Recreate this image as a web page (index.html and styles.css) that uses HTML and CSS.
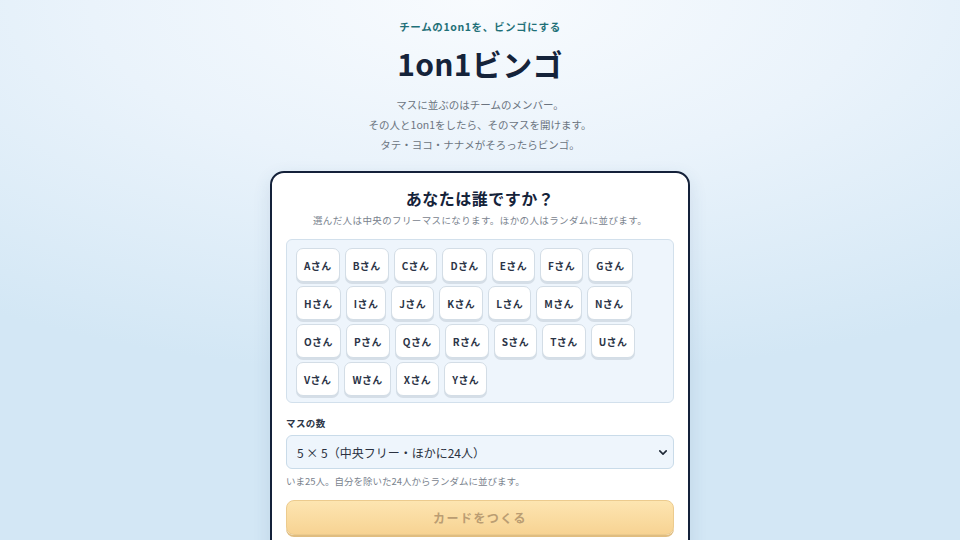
FILE: index.html
```html
<!DOCTYPE html>
<html lang="ja">
<head>
<meta charset="utf-8">
<title>1on1ビンゴ</title>
<link rel="stylesheet" href="styles.css">
</head>
<body>
<main class="page">
  <header class="hero">
    <p class="eyebrow">チームの1on1を、ビンゴにする</p>
    <h1 class="title">1on1ビンゴ</h1>
    <p class="lead">マスに並ぶのはチームのメンバー。<br>その人と1on1をしたら、そのマスを開けます。<br>タテ・ヨコ・ナナメがそろったらビンゴ。</p>
  </header>
  <section class="card">
    <h2 class="card-title">あなたは誰ですか？</h2>
    <p class="card-sub">選んだ人は中央のフリーマスになります。ほかの人はランダムに並びます。</p>
    <div class="members">
      <button class="chip">Aさん</button><button class="chip">Bさん</button><button class="chip">Cさん</button><button class="chip">Dさん</button><button class="chip">Eさん</button><button class="chip">Fさん</button><button class="chip">Gさん</button>
      <button class="chip">Hさん</button><button class="chip">Iさん</button><button class="chip">Jさん</button><button class="chip">Kさん</button><button class="chip">Lさん</button><button class="chip">Mさん</button><button class="chip">Nさん</button>
      <button class="chip">Oさん</button><button class="chip">Pさん</button><button class="chip">Qさん</button><button class="chip">Rさん</button><button class="chip">Sさん</button><button class="chip">Tさん</button><button class="chip">Uさん</button>
      <button class="chip">Vさん</button><button class="chip">Wさん</button><button class="chip">Xさん</button><button class="chip">Yさん</button>
    </div>
    <label class="field-label" for="size">マスの数</label>
    <div class="select-wrap">
      <select id="size" class="select">
        <option>5 × 5（中央フリー・ほかに24人）</option>
      </select>
      <svg class="chev" viewBox="0 0 10 6" width="8" height="5"><path d="M1 1l4 4 4-4" fill="none" stroke="#1f2937" stroke-width="2" stroke-linecap="round" stroke-linejoin="round"/></svg>
    </div>
    <p class="hint">いま25人。自分を除いた24人からランダムに並びます。</p>
    <button class="make" disabled>カードをつくる</button>
    <div class="next"></div>
  </section>
</main>
</body>
</html>
```
FILE: styles.css
```css
* { box-sizing: border-box; }
html, body { height: 100%; }
body {
  margin: 0;
  font-family: "Noto Sans CJK JP", "Noto Sans", sans-serif;
  color: #15233a;
  background: radial-gradient(ellipse 90% 70% at 50% 0%, #f8fbfe 0%, #eaf3fb 45%, #d3e7f5 100%);
  background-color: #d3e7f5;
  overflow: hidden;
}
.page {
  display: flex;
  flex-direction: column;
  align-items: center;
  padding-top: 18px;
}
.hero { text-align: center; }
.eyebrow {
  margin: 0;
  font-size: 10.5px;
  line-height: 18px;
  font-weight: 700;
  color: #1f7078;
  letter-spacing: 0.06em;
}
.title {
  margin: 8px 0 0;
  font-size: 30px;
  line-height: 38px;
  font-weight: 700;
  color: #15233a;
  letter-spacing: 0.01em;
}
.lead {
  margin: 13px 0 0;
  font-size: 10.5px;
  line-height: 20px;
  color: #6b7480;
  letter-spacing: 0;
}
.card {
  margin-top: 16px;
  width: 420px;
  background: #ffffff;
  border: 2px solid #14213a;
  border-radius: 14px;
  padding: 13px 14px 0;
  display: flex;
  flex-direction: column;
  box-shadow: 0 6px 18px rgba(40, 80, 120, 0.12);
}
.card-title {
  margin: 0;
  text-align: center;
  font-size: 16px;
  line-height: 24px;
  font-weight: 700;
  color: #15233a;
  letter-spacing: 0.03em;
}
.card-sub {
  margin: 2px 0 0;
  text-align: center;
  font-size: 9.5px;
  line-height: 16px;
  color: #7a838e;
  letter-spacing: 0.04em;
}
.members {
  margin-top: 11px;
  background: #eef5fc;
  border: 1px solid #d2e0ec;
  border-radius: 6px;
  padding: 8px 9px 6px;
  display: flex;
  flex-wrap: wrap;
  gap: 4px 5px;
  min-height: 160px;
  align-content: flex-start;
}
.chip {
  font-family: inherit;
  height: 34px;
  padding: 0 7px;
  background: #ffffff;
  border: 1px solid #d3dde6;
  border-radius: 7px;
  box-shadow: 0 2px 0 #d5dee7;
  font-size: 10px;
  font-weight: 600;
  color: #2b3446;
  letter-spacing: 0.04em;
  min-width: 39px;
}
.field-label {
  margin-top: 13px;
  font-size: 9.5px;
  line-height: 14px;
  font-weight: 700;
  color: #2b3446;
  letter-spacing: 0.04em;
}
.select-wrap {
  position: relative;
  margin-top: 5px;
}
.select {
  width: 100%;
  height: 34px;
  appearance: none;
  -webkit-appearance: none;
  background: #eef5fc;
  border: 1px solid #c9dbe9;
  border-radius: 6px;
  padding: 0 10px;
  font-family: inherit;
  font-size: 12px;
  color: #2a3140;
  letter-spacing: 0;
}
.chev {
  position: absolute;
  right: 7px;
  top: 15px;
  pointer-events: none;
}
.hint {
  margin: 5px 0 0;
  font-size: 9.5px;
  line-height: 14px;
  color: #7a838e;
  letter-spacing: 0;
}
.make {
  margin-top: 12px;
  height: 35px;
  width: 100%;
  font-family: inherit;
  background: linear-gradient(#fde5b1, #f7d393);
  border: 1px solid #eccb8e;
  border-radius: 8px;
  box-shadow: 0 2px 0 #e0bd80;
  font-size: 12px;
  font-weight: 700;
  color: #bb9d72;
  letter-spacing: 0.12em;
}
.next {
  margin-top: 5px;
  height: 30px;
  border: 1px solid #d2e0ec;
  border-radius: 8px;
  background: #f3f8fc;
}
```
